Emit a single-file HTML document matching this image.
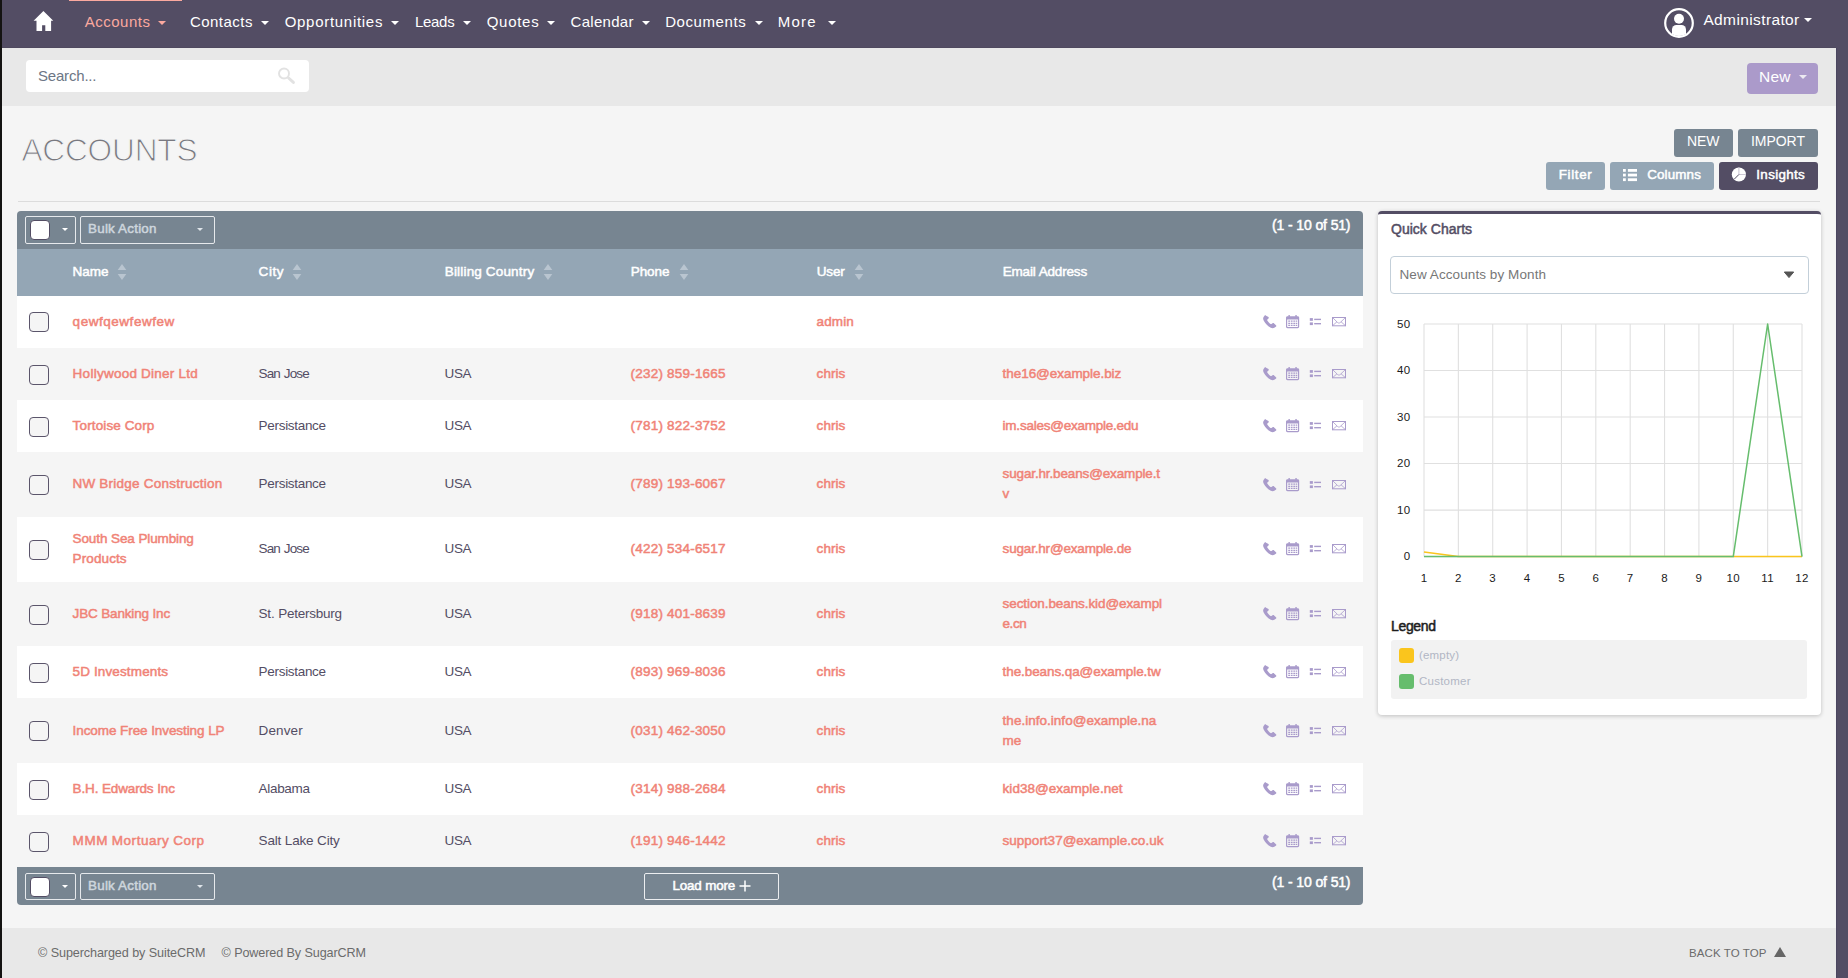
<!DOCTYPE html>
<html lang="en">
<head>
<meta charset="utf-8">
<title>Accounts - SuiteCRM</title>
<style>
*{box-sizing:border-box;margin:0;padding:0}
html,body{width:1848px;height:978px;overflow:hidden}
body{background:#141312;font-family:"Liberation Sans",sans-serif;font-size:14px;color:#534d64;position:relative}
a{text-decoration:none;color:inherit}
i{font-style:normal;display:block}
.abs{position:absolute}
#app{position:absolute;left:2px;top:0;width:1834px;height:978px;background:#f5f5f5}
#scroll{position:absolute;left:1836px;top:0;width:12px;height:978px;background:#534d64}
#scroll i{position:absolute;left:0;top:48px;width:1px;height:930px;background:#4b4660}
#edge{position:absolute;left:1835px;top:48px;width:1px;height:930px;background:#f3f3f3}
/* navbar */
#nav{position:absolute;left:2px;top:0;width:1834px;height:48px;background:#534d64;border-bottom:1px solid #4f495f}
.item{position:absolute;top:11px;height:22px;line-height:22px;font-size:15px;color:#fff;white-space:nowrap}
.item.active{color:#fba99f}
.caret{position:absolute;top:21px;width:0;height:0;border-left:4px solid transparent;border-right:4px solid transparent;border-top:4px solid #fff}
.caret.active{border-top-color:#fba99f}
#navbar-active{position:absolute;left:69px;top:0;width:113px;height:1px;background:#fba99f}
#admin{position:absolute;left:1703.4px;top:9.1px;line-height:22px;font-size:15.5px;color:#fff;white-space:nowrap}
/* search strip */
#strip{position:absolute;left:2px;top:48px;width:1834px;height:58px;background:#e8e8e8}
#search{position:absolute;left:26px;top:60px;width:283px;height:32px;background:#fff;border-radius:4px}
#search span.t{position:absolute;left:12px;top:0;line-height:31.4px;font-size:15px;color:#6c7685;white-space:nowrap}
#newbtn{position:absolute;left:1747px;top:63px;width:71px;height:31px;background:#ab9aca;border-radius:4px;color:#fff;font-size:15.5px;line-height:28.4px}
#newbtn span.t{position:absolute;left:12px;top:0;white-space:nowrap}
#newbtn i{position:absolute;left:52px;top:12px;width:0;height:0;border-left:4px solid transparent;border-right:4px solid transparent;border-top:4px solid #ece9f1}
/* title */
#title{position:absolute;left:21.4px;top:130.6px;font-size:31.6px;line-height:38px;color:#797980;font-weight:400;white-space:nowrap;-webkit-text-stroke:1.05px #f5f5f5}
.btn{position:absolute;height:28px;border-radius:3px;color:#fff;line-height:24px;white-space:nowrap}
.btn>span{position:absolute;top:0}
.btn.main{background:#778591;font-size:14px}
.btn.sub{line-height:26.3px;background:#94a6b5;font-weight:400;-webkit-text-stroke-width:.5px;font-size:13.4px}
.btn.dark{background:#534d64}
#hr{position:absolute;left:18px;top:201px;width:1802px;height:1px;background:#dcdcdc}
/* table */
#tbar,#bbar{position:absolute;left:17px;width:1346px;height:38px;background:#778591}
#tbar{top:211px;border-radius:4px 4px 0 0}
#bbar{top:867px;border-radius:0 0 4px 4px}
#thead{position:absolute;left:17px;top:249px;width:1346px;height:47px;background:#94a6b5}
.selbox{position:absolute;left:25px;width:51px;height:28px;border:1px solid #e6e9ec;border-radius:2px}
.selbox i.k{position:absolute;left:4px;top:3px;width:20px;height:20px;border:1px solid #534d64;border-radius:4px;background:#fff}
.selbox i.v{position:absolute;left:36px;top:11px;width:0;height:0;border-left:3px solid transparent;border-right:3px solid transparent;border-top:3px solid #fff}
.bulk{position:absolute;left:80px;width:135px;height:28px;border:1px solid #e6e9ec;border-radius:2px;font-weight:400;-webkit-text-stroke-width:.5px;font-size:13.4px;color:#ced6dd;line-height:24px;white-space:nowrap}
.bulk>span{position:absolute;left:7px;top:0}
.bulk i{position:absolute;left:116px;top:11px;width:0;height:0;border-left:3px solid transparent;border-right:3px solid transparent;border-top:3px solid #dfe5ea}
.count{position:absolute;font-weight:400;-webkit-text-stroke-width:.5px;font-size:14px;color:#fff;white-space:nowrap;line-height:20px}
.row{position:absolute;left:17px;width:1346px}
.c{position:absolute;margin-top:-.4px;margin-left:.6px;line-height:20px;height:20px;white-space:nowrap;font-size:13.5px}
.lk{color:#f08377;font-weight:400;-webkit-text-stroke-width:.5px}
.tx{color:#534d64}
.th{color:#fff;font-weight:400;-webkit-text-stroke-width:.5px}
.cb{position:absolute;margin-top:-.2px;left:29px;width:20px;height:20px;border:1px solid #5b556b;border-radius:4px;background:#f5f5f5}
#loadmore{position:absolute;left:644px;top:873px;width:135px;height:27px;border:1px solid #eceef0;border-radius:2px;color:#fff;font-weight:400;-webkit-text-stroke-width:.5px;font-size:13.4px;line-height:24px;white-space:nowrap}
#loadmore>span{position:absolute;left:27.6px;top:0}
/* panel */
#panel{position:absolute;left:1378px;top:211px;width:443px;height:504px;background:#fff;border-top:3px solid #534d64;border-radius:4px;box-shadow:0 1px 4px rgba(0,0,0,.22)}
#ptitle{position:absolute;left:1391px;top:219px;font-weight:400;-webkit-text-stroke-width:.5px;font-size:14px;line-height:20px;color:#534d64;white-space:nowrap}
#psel{position:absolute;left:1390px;top:256px;width:419px;height:38px;border:1px solid #c3cfd9;border-radius:4px;background:#fff}
#psel>span{position:absolute;left:8.5px;top:0;line-height:35px;font-size:13.5px;color:#777;white-space:nowrap}
#legendt{position:absolute;left:1391px;top:616px;font-weight:400;-webkit-text-stroke-width:.5px;font-size:14px;line-height:20px;color:#1d1d1d;white-space:nowrap}
#legend{position:absolute;left:1391px;top:640px;width:416px;height:59px;background:#f2f2f2;border-radius:3px}
.sw{position:absolute;left:1399px;width:15px;height:15px;border-radius:3px}
.ll{position:absolute;left:1419px;font-size:11.5px;line-height:16px;color:#b1b6c4;white-space:nowrap}
/* footer */
#footer{position:absolute;left:2px;top:928px;width:1834px;height:50px;background:#e8e8e8}
.ft{position:absolute;top:943.5px;font-size:12.6px;line-height:18px;color:#6b6b6b;white-space:nowrap}
</style>
</head>
<body>
<div id="app"></div>
<div id="scroll"><i></i></div>
<div id="edge"></div>

<!-- NAVBAR -->
<div id="nav"></div>
<div id="navbar-active"></div>
<svg class="abs" style="left:33px;top:10px" width="21" height="22" viewBox="33 10 21 22"><path d="M43.400 10.900L33.600 20.700H36.500V31H42.100V25.200H45.300V31H51.100V20.700H53.300Z" fill="#fff"/></svg>
<a class="item active" style="left:84.7px;letter-spacing:0.5px">Accounts</a><i class="caret active" style="left:158.2px"></i>
<a class="item" style="left:189.9px;letter-spacing:0.471px">Contacts</a><i class="caret" style="left:261.0px"></i>
<a class="item" style="left:284.7px;letter-spacing:0.707px">Opportunities</a><i class="caret" style="left:391.0px"></i>
<a class="item" style="left:414.9px;letter-spacing:-0.269px">Leads</a><i class="caret" style="left:462.7px"></i>
<a class="item" style="left:486.7px;letter-spacing:0.725px">Quotes</a><i class="caret" style="left:547.0px"></i>
<a class="item" style="left:570.5px;letter-spacing:0.304px">Calendar</a><i class="caret" style="left:641.5px"></i>
<a class="item" style="left:665.2px;letter-spacing:0.578px">Documents</a><i class="caret" style="left:754.5px"></i>
<a class="item" style="left:777.7px;letter-spacing:1.271px">More</a><i class="caret" style="left:828.0px"></i>
<svg class="abs" style="left:1664px;top:8px" width="30" height="30" viewBox="0 0 30 30"><defs><clipPath id="uc"><circle cx="15" cy="15" r="13"/></clipPath></defs><circle cx="15" cy="15" r="13.800" fill="none" stroke="#fff" stroke-width="2.200"/><circle cx="15" cy="10.700" r="5" fill="#fff"/><path d="M8 30V21.500a4.500 4.500 0 0 1 4.500-4.500h5a4.500 4.500 0 0 1 4.500 4.500V30z" fill="#fff" clip-path="url(#uc)"/></svg>
<div id="admin"><span style="letter-spacing:0.382px">Administrator</span></div>
<i class="caret" style="left:1804px;top:18px"></i>

<!-- SEARCH STRIP -->
<div id="strip"></div>
<div id="search"><span class="t"><span style="letter-spacing:-0.191px">Search...</span></span>
<svg class="abs" style="left:250px;top:6px" width="22" height="20" viewBox="0 0 22 20"><circle cx="8" cy="7.500" r="5" fill="none" stroke="#e2e2e2" stroke-width="1.900"/><path d="M12.600 12L17.400 16.400" stroke="#e2e2e2" stroke-width="3" stroke-linecap="round"/></svg>
</div>
<div id="newbtn"><span class="t"><span style="letter-spacing:0.242px">New</span></span><i></i></div>

<!-- TITLE + ACTIONS -->
<h1 id="title"><span style="letter-spacing:-0.171px">ACCOUNTS</span></h1>
<div class="btn main" style="left:1674px;top:129px;width:59px"><span style="left:13.1px"><span style="letter-spacing:-0.086px">NEW</span></span></div>
<div class="btn main" style="left:1738px;top:129px;width:80px"><span style="left:13px"><span style="letter-spacing:-0.041px">IMPORT</span></span></div>
<div class="btn sub" style="left:1546px;top:162px;width:59px"><span style="left:12.8px"><span style="letter-spacing:0.627px">Filter</span></span></div>
<div class="btn sub" style="left:1610px;top:162px;width:104px"><span style="left:37.2px"><span style="letter-spacing:0.143px">Columns</span></span>
<svg class="abs" style="left:13px;top:7px" width="14" height="13" viewBox="0 0 14 13" fill="#fff"><rect x="0" y="0" width="2.800" height="2.800"/><rect x="4.900" y="0" width="9.100" height="2.800"/><rect x="0" y="4.650" width="2.800" height="2.800"/><rect x="4.900" y="4.650" width="9.100" height="2.800"/><rect x="0" y="9.300" width="2.800" height="2.800"/><rect x="4.900" y="9.300" width="9.100" height="2.800"/></svg></div>
<div class="btn sub dark" style="left:1719px;top:162px;width:99px"><span style="left:37.3px"><span style="letter-spacing:0.335px">Insights</span></span>
<svg class="abs" style="left:12px;top:5px" width="16" height="16" viewBox="0 0 16 16"><circle cx="7.900" cy="7.500" r="7.100" fill="#fff"/><path d="M7.900 0.400V7.500H15" stroke="#cdc9d6" stroke-width="1.100" fill="none"/><path d="M7.900 7.500L2.900 12.500" stroke="#534d64" stroke-width="1" fill="none"/></svg></div>
<div id="hr"></div>

<!-- TABLE -->
<div id="tbar"></div>
<div class="selbox" style="top:216px"><i class="k"></i><i class="v"></i></div>
<div class="bulk" style="top:216px"><span><span style="letter-spacing:0.25px;word-spacing:-0.25px">Bulk Action</span></span><i></i></div>
<div class="count" style="left:1272px;top:215px"><span style="letter-spacing:-0.184px;word-spacing:0.184px">(1 - 10 of 51)</span></div>
<div id="thead"></div>
<div class="c th" style="left:71.8px;top:262px;letter-spacing:-0.005px">Name</div>
<svg class="abs" style="left:117.4px;top:264px" width="10" height="16" viewBox="0 0 10 16" fill="#b9c5d0"><path d="M5 0L9.300 6H0.700z"/><path d="M5 16L9.300 10H0.700z"/></svg>
<div class="c th" style="left:258.0px;top:262px;letter-spacing:0.583px">City</div>
<svg class="abs" style="left:292.4px;top:264px" width="10" height="16" viewBox="0 0 10 16" fill="#b9c5d0"><path d="M5 0L9.300 6H0.700z"/><path d="M5 16L9.300 10H0.700z"/></svg>
<div class="c th" style="left:444.1px;top:262px;letter-spacing:0.189px;word-spacing:-0.189px">Billing Country</div>
<svg class="abs" style="left:543.4px;top:264px" width="10" height="16" viewBox="0 0 10 16" fill="#b9c5d0"><path d="M5 0L9.300 6H0.700z"/><path d="M5 16L9.300 10H0.700z"/></svg>
<div class="c th" style="left:630.1px;top:262px;letter-spacing:-0.062px">Phone</div>
<svg class="abs" style="left:679.1px;top:264px" width="10" height="16" viewBox="0 0 10 16" fill="#b9c5d0"><path d="M5 0L9.300 6H0.700z"/><path d="M5 16L9.300 10H0.700z"/></svg>
<div class="c th" style="left:816.1px;top:262px;letter-spacing:-0.139px">User</div>
<svg class="abs" style="left:853.9px;top:264px" width="10" height="16" viewBox="0 0 10 16" fill="#b9c5d0"><path d="M5 0L9.300 6H0.700z"/><path d="M5 16L9.300 10H0.700z"/></svg>
<div class="c th" style="left:1002.1px;top:262.5px;letter-spacing:-0.163px;word-spacing:0.163px">Email Address</div>
<div class="row" style="top:296px;height:52px;background:#fff"></div>
<i class="cb" style="top:312.5px"></i>
<div class="c lk" style="left:72px;top:312.0px;letter-spacing:0.532px">qewfqewfewfew</div>
<div class="c lk" style="left:816px;top:312.0px;letter-spacing:0.105px">admin</div>
<svg class="abs" style="left:1262px;top:315.4px" width="86" height="16" viewBox="0 0 86 16" fill="#a99bcb">
<path transform="translate(.9,0) scale(1,.96)" d="M3.2 0.7c-.5-.5-1.2-.4-1.6.1L.7 2C0 3 .1 4.500 .9 5.900c1.500 2.800 3.700 5.300 6.600 7.100 1.300.8 2.800 1 3.900.3l1.500-1c.6-.4.700-1.200.2-1.700L11.200 8.800c-.4-.4-1.100-.5-1.600-.1l-1 .8c-.3.200-.7.200-1 0C6.300 8.400 5 6.900 4.300 5.500c-.2-.3-.1-.7.200-.9l.9-.8c.5-.4.600-1.100.2-1.600z"/>
<g transform="translate(23.700,0) scale(1.06,.98)"><path d="M2.600 0h1.300v1.400h5.200V0h1.300v1.400h.9c.8 0 1.400.6 1.400 1.400v9.300c0 .8-.6 1.400-1.400 1.400H1.700c-.8 0-1.400-.6-1.400-1.400V2.800c0-.8.600-1.400 1.400-1.400h.9zM1.400 4.500v7.300c0 .300.200.5.500.5h9.200c.3 0 .5-.2.500-.5V4.500z"/><path d="M2.400 5.600h1.700v1.400H2.400zM4.800 5.600h1.700v1.400H4.800zM7.200 5.600h1.700v1.400H7.200zM9.500 5.600h1.400v1.400H9.500zM2.400 7.800h1.700v1.400H2.400zM4.800 7.800h1.700v1.400H4.800zM7.200 7.800h1.700v1.400H7.200zM9.500 7.800h1.400v1.400H9.500zM2.400 10h1.700v1.300H2.400zM4.800 10h1.700v1.300H4.800zM7.200 10h1.700v1.300H7.200zM9.500 10h1.400v1.300H9.500z"/></g>
<g transform="translate(47.800,0)"><rect x="0" y="3.100" width="3.100" height="2.700"/><rect x="4.400" y="3.700" width="6.800" height="1.400"/><rect x="0" y="7.400" width="3.100" height="2.700"/><rect x="4.400" y="8" width="6.800" height="1.400"/></g>
<g transform="translate(70,0)" fill="none" stroke="#a99bcb"><rect x="0.500" y="2.500" width="13" height="8.300" stroke-width="1"/><path d="M0.800 2.800L5.700 7.600c.7.600 1.700.6 2.400 0L13.200 2.800M0.800 10.500L5 6.700M13.200 10.500L9 6.700" stroke-width=".8"/></g>
</svg>
<div class="row" style="top:348px;height:52px;background:#f5f5f5"></div>
<i class="cb" style="top:365.1px"></i>
<div class="c lk" style="left:72px;top:364.0px;letter-spacing:0.268px;word-spacing:-0.268px">Hollywood Diner Ltd</div>
<div class="c tx" style="left:258px;top:364.0px;letter-spacing:-0.866px;word-spacing:0.866px">San Jose</div>
<div class="c tx" style="left:444px;top:364.0px;letter-spacing:-0.383px">USA</div>
<div class="c lk" style="left:630px;top:364.0px;letter-spacing:0.223px;word-spacing:-0.223px">(232) 859-1665</div>
<div class="c lk" style="left:816px;top:364.0px;letter-spacing:0.046px">chris</div>
<div class="c lk" style="left:1002px;top:364.0px;letter-spacing:-0.052px">the16@example.biz</div>
<svg class="abs" style="left:1262px;top:367.4px" width="86" height="16" viewBox="0 0 86 16" fill="#a99bcb">
<path transform="translate(.9,0) scale(1,.96)" d="M3.2 0.7c-.5-.5-1.2-.4-1.6.1L.7 2C0 3 .1 4.500 .9 5.900c1.500 2.800 3.700 5.300 6.600 7.100 1.300.8 2.800 1 3.900.3l1.500-1c.6-.4.700-1.200.2-1.700L11.200 8.800c-.4-.4-1.100-.5-1.600-.1l-1 .8c-.3.200-.7.200-1 0C6.300 8.400 5 6.900 4.300 5.500c-.2-.3-.1-.7.200-.9l.9-.8c.5-.4.600-1.100.2-1.600z"/>
<g transform="translate(23.700,0) scale(1.06,.98)"><path d="M2.600 0h1.300v1.400h5.200V0h1.300v1.400h.9c.8 0 1.400.6 1.400 1.400v9.300c0 .8-.6 1.400-1.400 1.400H1.700c-.8 0-1.400-.6-1.400-1.400V2.800c0-.8.600-1.400 1.400-1.400h.9zM1.400 4.500v7.300c0 .300.200.5.500.5h9.200c.3 0 .5-.2.500-.5V4.500z"/><path d="M2.400 5.600h1.700v1.400H2.400zM4.800 5.600h1.700v1.400H4.800zM7.200 5.600h1.700v1.400H7.200zM9.500 5.600h1.400v1.400H9.500zM2.400 7.800h1.700v1.400H2.400zM4.800 7.800h1.700v1.400H4.800zM7.200 7.800h1.700v1.400H7.200zM9.500 7.800h1.400v1.400H9.500zM2.400 10h1.700v1.300H2.400zM4.800 10h1.700v1.300H4.800zM7.200 10h1.700v1.300H7.200zM9.500 10h1.400v1.300H9.500z"/></g>
<g transform="translate(47.800,0)"><rect x="0" y="3.100" width="3.100" height="2.700"/><rect x="4.400" y="3.700" width="6.800" height="1.400"/><rect x="0" y="7.400" width="3.100" height="2.700"/><rect x="4.400" y="8" width="6.800" height="1.400"/></g>
<g transform="translate(70,0)" fill="none" stroke="#a99bcb"><rect x="0.500" y="2.500" width="13" height="8.300" stroke-width="1"/><path d="M0.800 2.800L5.700 7.600c.7.600 1.700.6 2.400 0L13.200 2.800M0.800 10.500L5 6.700M13.200 10.500L9 6.700" stroke-width=".8"/></g>
</svg>
<div class="row" style="top:400px;height:52px;background:#fff"></div>
<i class="cb" style="top:417.1px"></i>
<div class="c lk" style="left:72px;top:416.0px;letter-spacing:0.137px;word-spacing:-0.137px">Tortoise Corp</div>
<div class="c tx" style="left:258px;top:416.0px;letter-spacing:-0.305px">Persistance</div>
<div class="c tx" style="left:444px;top:416.0px;letter-spacing:-0.383px">USA</div>
<div class="c lk" style="left:630px;top:416.0px;letter-spacing:0.223px;word-spacing:-0.223px">(781) 822-3752</div>
<div class="c lk" style="left:816px;top:416.0px;letter-spacing:0.046px">chris</div>
<div class="c lk" style="left:1002px;top:416.0px;letter-spacing:-0.238px">im.sales@example.edu</div>
<svg class="abs" style="left:1262px;top:419.4px" width="86" height="16" viewBox="0 0 86 16" fill="#a99bcb">
<path transform="translate(.9,0) scale(1,.96)" d="M3.2 0.7c-.5-.5-1.2-.4-1.6.1L.7 2C0 3 .1 4.500 .9 5.900c1.500 2.800 3.700 5.300 6.600 7.100 1.300.8 2.800 1 3.900.3l1.500-1c.6-.4.700-1.200.2-1.700L11.200 8.800c-.4-.4-1.100-.5-1.600-.1l-1 .8c-.3.200-.7.200-1 0C6.300 8.400 5 6.900 4.300 5.500c-.2-.3-.1-.7.200-.9l.9-.8c.5-.4.600-1.100.2-1.600z"/>
<g transform="translate(23.700,0) scale(1.06,.98)"><path d="M2.600 0h1.300v1.400h5.200V0h1.300v1.400h.9c.8 0 1.400.6 1.400 1.400v9.300c0 .8-.6 1.400-1.400 1.400H1.700c-.8 0-1.400-.6-1.400-1.400V2.800c0-.8.600-1.400 1.400-1.400h.9zM1.400 4.500v7.300c0 .300.200.5.500.5h9.200c.3 0 .5-.2.500-.5V4.500z"/><path d="M2.400 5.600h1.700v1.400H2.400zM4.800 5.600h1.700v1.400H4.800zM7.200 5.600h1.700v1.400H7.200zM9.500 5.600h1.400v1.400H9.500zM2.400 7.800h1.700v1.400H2.400zM4.800 7.800h1.700v1.400H4.800zM7.200 7.800h1.700v1.400H7.200zM9.500 7.800h1.400v1.400H9.500zM2.400 10h1.700v1.300H2.400zM4.800 10h1.700v1.300H4.800zM7.200 10h1.700v1.300H7.200zM9.500 10h1.400v1.300H9.500z"/></g>
<g transform="translate(47.800,0)"><rect x="0" y="3.100" width="3.100" height="2.700"/><rect x="4.400" y="3.700" width="6.800" height="1.400"/><rect x="0" y="7.400" width="3.100" height="2.700"/><rect x="4.400" y="8" width="6.800" height="1.400"/></g>
<g transform="translate(70,0)" fill="none" stroke="#a99bcb"><rect x="0.500" y="2.500" width="13" height="8.300" stroke-width="1"/><path d="M0.800 2.800L5.700 7.600c.7.600 1.700.6 2.400 0L13.200 2.800M0.800 10.500L5 6.700M13.200 10.500L9 6.700" stroke-width=".8"/></g>
</svg>
<div class="row" style="top:452px;height:65px;background:#f5f5f5"></div>
<i class="cb" style="top:475.0px"></i>
<div class="c lk" style="left:72px;top:474.5px;letter-spacing:0.252px;word-spacing:-0.252px">NW Bridge Construction</div>
<div class="c tx" style="left:258px;top:474.5px;letter-spacing:-0.305px">Persistance</div>
<div class="c tx" style="left:444px;top:474.5px;letter-spacing:-0.383px">USA</div>
<div class="c lk" style="left:630px;top:474.5px;letter-spacing:0.223px;word-spacing:-0.223px">(789) 193-6067</div>
<div class="c lk" style="left:816px;top:474.5px;letter-spacing:0.046px">chris</div>
<div class="c lk" style="left:1002px;top:464.5px;letter-spacing:-0.144px">sugar.hr.beans@example.t</div><div class="c lk" style="left:1002px;top:484.5px;letter-spacing:0px">v</div>
<svg class="abs" style="left:1262px;top:477.9px" width="86" height="16" viewBox="0 0 86 16" fill="#a99bcb">
<path transform="translate(.9,0) scale(1,.96)" d="M3.2 0.7c-.5-.5-1.2-.4-1.6.1L.7 2C0 3 .1 4.500 .9 5.900c1.500 2.800 3.700 5.300 6.600 7.100 1.300.8 2.800 1 3.900.3l1.500-1c.6-.4.700-1.200.2-1.700L11.200 8.800c-.4-.4-1.100-.5-1.600-.1l-1 .8c-.3.200-.7.200-1 0C6.300 8.400 5 6.900 4.300 5.500c-.2-.3-.1-.7.200-.9l.9-.8c.5-.4.600-1.100.2-1.600z"/>
<g transform="translate(23.700,0) scale(1.06,.98)"><path d="M2.600 0h1.300v1.400h5.200V0h1.300v1.400h.9c.8 0 1.400.6 1.400 1.400v9.300c0 .8-.6 1.400-1.400 1.400H1.700c-.8 0-1.400-.6-1.400-1.400V2.800c0-.8.600-1.400 1.400-1.400h.9zM1.400 4.500v7.300c0 .300.200.5.500.5h9.200c.3 0 .5-.2.500-.5V4.500z"/><path d="M2.400 5.600h1.700v1.400H2.400zM4.800 5.600h1.700v1.400H4.800zM7.200 5.600h1.700v1.400H7.200zM9.500 5.600h1.400v1.400H9.500zM2.400 7.800h1.700v1.400H2.400zM4.800 7.800h1.700v1.400H4.800zM7.200 7.800h1.700v1.400H7.200zM9.500 7.800h1.400v1.400H9.500zM2.400 10h1.700v1.300H2.400zM4.800 10h1.700v1.300H4.800zM7.200 10h1.700v1.300H7.200zM9.500 10h1.400v1.300H9.500z"/></g>
<g transform="translate(47.800,0)"><rect x="0" y="3.100" width="3.100" height="2.700"/><rect x="4.400" y="3.700" width="6.800" height="1.400"/><rect x="0" y="7.400" width="3.100" height="2.700"/><rect x="4.400" y="8" width="6.800" height="1.400"/></g>
<g transform="translate(70,0)" fill="none" stroke="#a99bcb"><rect x="0.500" y="2.500" width="13" height="8.300" stroke-width="1"/><path d="M0.800 2.800L5.700 7.600c.7.600 1.700.6 2.400 0L13.200 2.800M0.800 10.500L5 6.700M13.200 10.500L9 6.700" stroke-width=".8"/></g>
</svg>
<div class="row" style="top:517px;height:65px;background:#fff"></div>
<i class="cb" style="top:540.0px"></i>
<div class="c lk" style="left:72px;top:529.5px;letter-spacing:-0.12px;word-spacing:0.12px">South Sea Plumbing</div><div class="c lk" style="left:72px;top:549.5px;letter-spacing:0.103px">Products</div>
<div class="c tx" style="left:258px;top:539.5px;letter-spacing:-0.866px;word-spacing:0.866px">San Jose</div>
<div class="c tx" style="left:444px;top:539.5px;letter-spacing:-0.383px">USA</div>
<div class="c lk" style="left:630px;top:539.5px;letter-spacing:0.223px;word-spacing:-0.223px">(422) 534-6517</div>
<div class="c lk" style="left:816px;top:539.5px;letter-spacing:0.046px">chris</div>
<div class="c lk" style="left:1002px;top:539.5px;letter-spacing:-0.182px">sugar.hr@example.de</div>
<svg class="abs" style="left:1262px;top:541.9px" width="86" height="16" viewBox="0 0 86 16" fill="#a99bcb">
<path transform="translate(.9,0) scale(1,.96)" d="M3.2 0.7c-.5-.5-1.2-.4-1.6.1L.7 2C0 3 .1 4.500 .9 5.900c1.500 2.800 3.700 5.300 6.600 7.100 1.300.8 2.800 1 3.900.3l1.500-1c.6-.4.700-1.200.2-1.700L11.200 8.800c-.4-.4-1.100-.5-1.600-.1l-1 .8c-.3.200-.7.200-1 0C6.300 8.400 5 6.900 4.300 5.500c-.2-.3-.1-.7.200-.9l.9-.8c.5-.4.600-1.100.2-1.600z"/>
<g transform="translate(23.700,0) scale(1.06,.98)"><path d="M2.600 0h1.300v1.400h5.200V0h1.300v1.400h.9c.8 0 1.400.6 1.400 1.400v9.300c0 .8-.6 1.400-1.400 1.400H1.700c-.8 0-1.400-.6-1.400-1.400V2.800c0-.8.600-1.400 1.400-1.400h.9zM1.400 4.500v7.300c0 .300.200.5.500.5h9.200c.3 0 .5-.2.500-.5V4.500z"/><path d="M2.400 5.600h1.700v1.400H2.400zM4.800 5.600h1.700v1.400H4.800zM7.200 5.600h1.700v1.400H7.200zM9.500 5.600h1.400v1.400H9.500zM2.400 7.800h1.700v1.400H2.400zM4.800 7.800h1.700v1.400H4.800zM7.200 7.800h1.700v1.400H7.200zM9.500 7.800h1.400v1.400H9.500zM2.400 10h1.700v1.300H2.400zM4.800 10h1.700v1.300H4.800zM7.200 10h1.700v1.300H7.200zM9.500 10h1.400v1.300H9.500z"/></g>
<g transform="translate(47.800,0)"><rect x="0" y="3.100" width="3.100" height="2.700"/><rect x="4.400" y="3.700" width="6.800" height="1.400"/><rect x="0" y="7.400" width="3.100" height="2.700"/><rect x="4.400" y="8" width="6.800" height="1.400"/></g>
<g transform="translate(70,0)" fill="none" stroke="#a99bcb"><rect x="0.500" y="2.500" width="13" height="8.300" stroke-width="1"/><path d="M0.800 2.800L5.700 7.600c.7.600 1.700.6 2.400 0L13.200 2.800M0.800 10.500L5 6.700M13.200 10.500L9 6.700" stroke-width=".8"/></g>
</svg>
<div class="row" style="top:582px;height:64px;background:#f5f5f5"></div>
<i class="cb" style="top:605.1px"></i>
<div class="c lk" style="left:72px;top:604.0px;letter-spacing:-0.184px;word-spacing:0.184px">JBC Banking Inc</div>
<div class="c tx" style="left:258px;top:604.0px;letter-spacing:-0.233px;word-spacing:0.233px">St. Petersburg</div>
<div class="c tx" style="left:444px;top:604.0px;letter-spacing:-0.383px">USA</div>
<div class="c lk" style="left:630px;top:604.0px;letter-spacing:0.223px;word-spacing:-0.223px">(918) 401-8639</div>
<div class="c lk" style="left:816px;top:604.0px;letter-spacing:0.046px">chris</div>
<div class="c lk" style="left:1002px;top:594.0px;letter-spacing:-0.089px">section.beans.kid@exampl</div><div class="c lk" style="left:1002px;top:614.0px;letter-spacing:-0.477px">e.cn</div>
<svg class="abs" style="left:1262px;top:607.4px" width="86" height="16" viewBox="0 0 86 16" fill="#a99bcb">
<path transform="translate(.9,0) scale(1,.96)" d="M3.2 0.7c-.5-.5-1.2-.4-1.6.1L.7 2C0 3 .1 4.500 .9 5.900c1.500 2.800 3.700 5.300 6.600 7.100 1.300.8 2.800 1 3.900.3l1.500-1c.6-.4.700-1.200.2-1.700L11.200 8.800c-.4-.4-1.100-.5-1.600-.1l-1 .8c-.3.200-.7.200-1 0C6.300 8.400 5 6.900 4.300 5.500c-.2-.3-.1-.7.200-.9l.9-.8c.5-.4.600-1.100.2-1.600z"/>
<g transform="translate(23.700,0) scale(1.06,.98)"><path d="M2.600 0h1.300v1.400h5.200V0h1.300v1.400h.9c.8 0 1.400.6 1.400 1.400v9.300c0 .8-.6 1.400-1.400 1.400H1.700c-.8 0-1.400-.6-1.400-1.400V2.800c0-.8.600-1.400 1.400-1.400h.9zM1.400 4.500v7.300c0 .300.200.5.500.5h9.200c.3 0 .5-.2.500-.5V4.500z"/><path d="M2.400 5.600h1.700v1.400H2.400zM4.800 5.600h1.700v1.400H4.800zM7.200 5.600h1.700v1.400H7.200zM9.500 5.600h1.400v1.400H9.500zM2.400 7.800h1.700v1.400H2.400zM4.800 7.800h1.700v1.400H4.800zM7.200 7.800h1.700v1.400H7.200zM9.500 7.800h1.400v1.400H9.500zM2.400 10h1.700v1.300H2.400zM4.800 10h1.700v1.300H4.800zM7.200 10h1.700v1.300H7.200zM9.500 10h1.400v1.300H9.500z"/></g>
<g transform="translate(47.800,0)"><rect x="0" y="3.100" width="3.100" height="2.700"/><rect x="4.400" y="3.700" width="6.800" height="1.400"/><rect x="0" y="7.400" width="3.100" height="2.700"/><rect x="4.400" y="8" width="6.800" height="1.400"/></g>
<g transform="translate(70,0)" fill="none" stroke="#a99bcb"><rect x="0.500" y="2.500" width="13" height="8.300" stroke-width="1"/><path d="M0.800 2.800L5.700 7.600c.7.600 1.700.6 2.400 0L13.200 2.800M0.800 10.500L5 6.700M13.200 10.500L9 6.700" stroke-width=".8"/></g>
</svg>
<div class="row" style="top:646px;height:52px;background:#fff"></div>
<i class="cb" style="top:663.5px"></i>
<div class="c lk" style="left:72px;top:662.0px;letter-spacing:0.142px;word-spacing:-0.142px">5D Investments</div>
<div class="c tx" style="left:258px;top:662.0px;letter-spacing:-0.305px">Persistance</div>
<div class="c tx" style="left:444px;top:662.0px;letter-spacing:-0.383px">USA</div>
<div class="c lk" style="left:630px;top:662.0px;letter-spacing:0.223px;word-spacing:-0.223px">(893) 969-8036</div>
<div class="c lk" style="left:816px;top:662.0px;letter-spacing:0.046px">chris</div>
<div class="c lk" style="left:1002px;top:662.0px;letter-spacing:-0.089px">the.beans.qa@example.tw</div>
<svg class="abs" style="left:1262px;top:665.4px" width="86" height="16" viewBox="0 0 86 16" fill="#a99bcb">
<path transform="translate(.9,0) scale(1,.96)" d="M3.2 0.7c-.5-.5-1.2-.4-1.6.1L.7 2C0 3 .1 4.500 .9 5.900c1.500 2.800 3.700 5.300 6.600 7.100 1.300.8 2.800 1 3.900.3l1.500-1c.6-.4.700-1.200.2-1.700L11.200 8.800c-.4-.4-1.100-.5-1.600-.1l-1 .8c-.3.200-.7.200-1 0C6.300 8.400 5 6.900 4.300 5.500c-.2-.3-.1-.7.200-.9l.9-.8c.5-.4.600-1.100.2-1.600z"/>
<g transform="translate(23.700,0) scale(1.06,.98)"><path d="M2.600 0h1.300v1.400h5.200V0h1.300v1.400h.9c.8 0 1.400.6 1.400 1.400v9.300c0 .8-.6 1.400-1.400 1.400H1.700c-.8 0-1.400-.6-1.400-1.400V2.800c0-.8.600-1.400 1.400-1.400h.9zM1.400 4.500v7.300c0 .300.200.5.500.5h9.200c.3 0 .5-.2.500-.5V4.500z"/><path d="M2.400 5.600h1.700v1.400H2.400zM4.800 5.600h1.700v1.400H4.800zM7.200 5.600h1.700v1.400H7.200zM9.500 5.600h1.400v1.400H9.500zM2.400 7.800h1.700v1.400H2.400zM4.800 7.800h1.700v1.400H4.800zM7.200 7.800h1.700v1.400H7.200zM9.500 7.800h1.400v1.400H9.500zM2.400 10h1.700v1.300H2.400zM4.800 10h1.700v1.300H4.800zM7.200 10h1.700v1.300H7.200zM9.500 10h1.400v1.300H9.500z"/></g>
<g transform="translate(47.800,0)"><rect x="0" y="3.100" width="3.100" height="2.700"/><rect x="4.400" y="3.700" width="6.800" height="1.400"/><rect x="0" y="7.400" width="3.100" height="2.700"/><rect x="4.400" y="8" width="6.800" height="1.400"/></g>
<g transform="translate(70,0)" fill="none" stroke="#a99bcb"><rect x="0.500" y="2.500" width="13" height="8.300" stroke-width="1"/><path d="M0.800 2.800L5.700 7.600c.7.600 1.700.6 2.400 0L13.200 2.800M0.800 10.500L5 6.700M13.200 10.500L9 6.700" stroke-width=".8"/></g>
</svg>
<div class="row" style="top:698px;height:65px;background:#f5f5f5"></div>
<i class="cb" style="top:721.0px"></i>
<div class="c lk" style="left:72px;top:721.5px;letter-spacing:-0.091px;word-spacing:0.091px">Income Free Investing LP</div>
<div class="c tx" style="left:258px;top:721.5px;letter-spacing:0.114px">Denver</div>
<div class="c tx" style="left:444px;top:721.5px;letter-spacing:-0.383px">USA</div>
<div class="c lk" style="left:630px;top:721.5px;letter-spacing:0.223px;word-spacing:-0.223px">(031) 462-3050</div>
<div class="c lk" style="left:816px;top:721.5px;letter-spacing:0.046px">chris</div>
<div class="c lk" style="left:1002px;top:711.5px;letter-spacing:0.021px">the.info.info@example.na</div><div class="c lk" style="left:1002px;top:731.5px;letter-spacing:-0.066px">me</div>
<svg class="abs" style="left:1262px;top:723.9px" width="86" height="16" viewBox="0 0 86 16" fill="#a99bcb">
<path transform="translate(.9,0) scale(1,.96)" d="M3.2 0.7c-.5-.5-1.2-.4-1.6.1L.7 2C0 3 .1 4.500 .9 5.900c1.500 2.800 3.700 5.300 6.600 7.100 1.300.8 2.800 1 3.900.3l1.500-1c.6-.4.700-1.200.2-1.700L11.200 8.800c-.4-.4-1.100-.5-1.600-.1l-1 .8c-.3.200-.7.200-1 0C6.300 8.400 5 6.900 4.300 5.500c-.2-.3-.1-.7.200-.9l.9-.8c.5-.4.600-1.100.2-1.600z"/>
<g transform="translate(23.700,0) scale(1.06,.98)"><path d="M2.600 0h1.300v1.400h5.200V0h1.300v1.400h.9c.8 0 1.400.6 1.400 1.400v9.300c0 .8-.6 1.400-1.400 1.400H1.700c-.8 0-1.400-.6-1.400-1.400V2.800c0-.8.600-1.400 1.400-1.400h.9zM1.400 4.500v7.300c0 .300.200.5.500.5h9.200c.3 0 .5-.2.500-.5V4.500z"/><path d="M2.400 5.600h1.700v1.400H2.400zM4.800 5.600h1.700v1.400H4.800zM7.200 5.600h1.700v1.400H7.200zM9.500 5.600h1.400v1.400H9.500zM2.400 7.800h1.700v1.400H2.400zM4.800 7.800h1.700v1.400H4.800zM7.200 7.800h1.700v1.400H7.200zM9.500 7.800h1.400v1.400H9.500zM2.400 10h1.700v1.300H2.400zM4.800 10h1.700v1.300H4.800zM7.200 10h1.700v1.300H7.200zM9.500 10h1.400v1.300H9.500z"/></g>
<g transform="translate(47.800,0)"><rect x="0" y="3.100" width="3.100" height="2.700"/><rect x="4.400" y="3.700" width="6.800" height="1.400"/><rect x="0" y="7.400" width="3.100" height="2.700"/><rect x="4.400" y="8" width="6.800" height="1.400"/></g>
<g transform="translate(70,0)" fill="none" stroke="#a99bcb"><rect x="0.500" y="2.500" width="13" height="8.300" stroke-width="1"/><path d="M0.800 2.800L5.700 7.600c.7.600 1.700.6 2.400 0L13.200 2.800M0.800 10.500L5 6.700M13.200 10.500L9 6.700" stroke-width=".8"/></g>
</svg>
<div class="row" style="top:763px;height:52px;background:#fff"></div>
<i class="cb" style="top:780.5px"></i>
<div class="c lk" style="left:72px;top:779.0px;letter-spacing:-0.154px;word-spacing:0.154px">B.H. Edwards Inc</div>
<div class="c tx" style="left:258px;top:779.0px;letter-spacing:-0.316px">Alabama</div>
<div class="c tx" style="left:444px;top:779.0px;letter-spacing:-0.383px">USA</div>
<div class="c lk" style="left:630px;top:779.0px;letter-spacing:0.223px;word-spacing:-0.223px">(314) 988-2684</div>
<div class="c lk" style="left:816px;top:779.0px;letter-spacing:0.046px">chris</div>
<div class="c lk" style="left:1002px;top:779.0px;letter-spacing:0.023px">kid38@example.net</div>
<svg class="abs" style="left:1262px;top:782.4px" width="86" height="16" viewBox="0 0 86 16" fill="#a99bcb">
<path transform="translate(.9,0) scale(1,.96)" d="M3.2 0.7c-.5-.5-1.2-.4-1.6.1L.7 2C0 3 .1 4.500 .9 5.900c1.500 2.800 3.700 5.300 6.600 7.100 1.300.8 2.800 1 3.900.3l1.500-1c.6-.4.700-1.200.2-1.700L11.200 8.800c-.4-.4-1.100-.5-1.600-.1l-1 .8c-.3.200-.7.200-1 0C6.300 8.400 5 6.900 4.300 5.500c-.2-.3-.1-.7.200-.9l.9-.8c.5-.4.600-1.100.2-1.600z"/>
<g transform="translate(23.700,0) scale(1.06,.98)"><path d="M2.600 0h1.300v1.400h5.200V0h1.300v1.400h.9c.8 0 1.400.6 1.400 1.400v9.300c0 .8-.6 1.400-1.400 1.400H1.700c-.8 0-1.400-.6-1.400-1.400V2.800c0-.8.600-1.400 1.400-1.400h.9zM1.400 4.500v7.300c0 .300.200.5.500.5h9.200c.3 0 .5-.2.500-.5V4.500z"/><path d="M2.400 5.600h1.700v1.400H2.400zM4.800 5.600h1.700v1.400H4.800zM7.200 5.600h1.700v1.400H7.200zM9.500 5.600h1.400v1.400H9.500zM2.400 7.800h1.700v1.400H2.400zM4.800 7.800h1.700v1.400H4.800zM7.200 7.800h1.700v1.400H7.200zM9.500 7.800h1.400v1.400H9.500zM2.400 10h1.700v1.300H2.400zM4.800 10h1.700v1.300H4.800zM7.200 10h1.700v1.300H7.200zM9.500 10h1.400v1.300H9.500z"/></g>
<g transform="translate(47.800,0)"><rect x="0" y="3.100" width="3.100" height="2.700"/><rect x="4.400" y="3.700" width="6.800" height="1.400"/><rect x="0" y="7.400" width="3.100" height="2.700"/><rect x="4.400" y="8" width="6.800" height="1.400"/></g>
<g transform="translate(70,0)" fill="none" stroke="#a99bcb"><rect x="0.500" y="2.500" width="13" height="8.300" stroke-width="1"/><path d="M0.800 2.800L5.700 7.600c.7.600 1.700.6 2.400 0L13.200 2.800M0.800 10.500L5 6.700M13.200 10.500L9 6.700" stroke-width=".8"/></g>
</svg>
<div class="row" style="top:815px;height:52px;background:#f5f5f5"></div>
<i class="cb" style="top:832.5px"></i>
<div class="c lk" style="left:72px;top:831.0px;letter-spacing:0.552px;word-spacing:-0.552px">MMM Mortuary Corp</div>
<div class="c tx" style="left:258px;top:831.0px;letter-spacing:-0.191px;word-spacing:0.191px">Salt Lake City</div>
<div class="c tx" style="left:444px;top:831.0px;letter-spacing:-0.383px">USA</div>
<div class="c lk" style="left:630px;top:831.0px;letter-spacing:0.223px;word-spacing:-0.223px">(191) 946-1442</div>
<div class="c lk" style="left:816px;top:831.0px;letter-spacing:0.046px">chris</div>
<div class="c lk" style="left:1002px;top:831.0px;letter-spacing:0.0px">support37@example.co.uk</div>
<svg class="abs" style="left:1262px;top:834.4px" width="86" height="16" viewBox="0 0 86 16" fill="#a99bcb">
<path transform="translate(.9,0) scale(1,.96)" d="M3.2 0.7c-.5-.5-1.2-.4-1.6.1L.7 2C0 3 .1 4.500 .9 5.900c1.500 2.800 3.700 5.300 6.600 7.100 1.300.8 2.800 1 3.900.3l1.500-1c.6-.4.700-1.200.2-1.700L11.200 8.800c-.4-.4-1.100-.5-1.600-.1l-1 .8c-.3.200-.7.200-1 0C6.300 8.400 5 6.900 4.300 5.500c-.2-.3-.1-.7.200-.9l.9-.8c.5-.4.600-1.100.2-1.600z"/>
<g transform="translate(23.700,0) scale(1.06,.98)"><path d="M2.600 0h1.300v1.400h5.200V0h1.300v1.400h.9c.8 0 1.400.6 1.400 1.400v9.300c0 .8-.6 1.400-1.400 1.400H1.700c-.8 0-1.400-.6-1.400-1.400V2.800c0-.8.600-1.400 1.400-1.400h.9zM1.400 4.500v7.300c0 .300.200.5.500.5h9.200c.3 0 .5-.2.500-.5V4.500z"/><path d="M2.400 5.600h1.700v1.400H2.400zM4.800 5.600h1.700v1.400H4.800zM7.200 5.600h1.700v1.400H7.200zM9.500 5.600h1.400v1.400H9.500zM2.400 7.800h1.700v1.400H2.400zM4.800 7.800h1.700v1.400H4.800zM7.200 7.800h1.700v1.400H7.200zM9.500 7.800h1.400v1.400H9.500zM2.400 10h1.700v1.300H2.400zM4.800 10h1.700v1.300H4.800zM7.200 10h1.700v1.300H7.200zM9.500 10h1.400v1.300H9.500z"/></g>
<g transform="translate(47.800,0)"><rect x="0" y="3.100" width="3.100" height="2.700"/><rect x="4.400" y="3.700" width="6.800" height="1.400"/><rect x="0" y="7.400" width="3.100" height="2.700"/><rect x="4.400" y="8" width="6.800" height="1.400"/></g>
<g transform="translate(70,0)" fill="none" stroke="#a99bcb"><rect x="0.500" y="2.500" width="13" height="8.300" stroke-width="1"/><path d="M0.800 2.800L5.700 7.600c.7.600 1.700.6 2.400 0L13.200 2.800M0.800 10.500L5 6.700M13.200 10.500L9 6.700" stroke-width=".8"/></g>
</svg>
<div id="bbar"></div>
<div class="selbox" style="top:873px;height:27px"><i class="k"></i><i class="v"></i></div>
<div class="bulk" style="top:873px;height:27px"><span style="top:-.5px"><span style="letter-spacing:0.25px;word-spacing:-0.25px">Bulk Action</span></span><i></i></div>
<div id="loadmore"><span><span style="letter-spacing:-0.219px;word-spacing:0.219px">Load more</span></span>
<svg class="abs" style="left:94px;top:6px" width="12" height="12" viewBox="0 0 12 12"><path d="M6 0.500V11.500M0.500 6H11.500" stroke="#fff" stroke-width="1.500"/></svg></div>
<div class="count" style="left:1272px;top:872px"><span style="letter-spacing:-0.184px;word-spacing:0.184px">(1 - 10 of 51)</span></div>

<!-- CHART PANEL -->
<div id="panel"></div>
<div id="ptitle"><span style="letter-spacing:0.018px;word-spacing:-0.018px">Quick Charts</span></div>
<div id="psel"><span><span style="letter-spacing:0.098px;word-spacing:-0.098px">New Accounts by Month</span></span>
<svg class="abs" style="left:392px;top:14px" width="12" height="8" viewBox="0 0 12 8"><path d="M1.300 1H10.700L6 6.600Z" fill="#555" stroke="#555" stroke-width="1" stroke-linejoin="round"/></svg></div>
<svg class="abs" style="left:1380px;top:300px" width="440" height="300" viewBox="1380 300 440 300" font-family="'Liberation Sans',sans-serif" font-size="11.5" letter-spacing=".35" fill="#1b1b1b">
<path d="M1424.00 324.00V556.60M1458.36 324.00V556.60M1492.73 324.00V556.60M1527.09 324.00V556.60M1561.45 324.00V556.60M1595.82 324.00V556.60M1630.18 324.00V556.60M1664.55 324.00V556.60M1698.91 324.00V556.60M1733.27 324.00V556.60M1767.64 324.00V556.60M1802.00 324.00V556.60M1424.00 324.00H1802.00M1424.00 370.52H1802.00M1424.00 417.04H1802.00M1424.00 463.56H1802.00M1424.00 510.08H1802.00M1424.00 556.60H1802.00" stroke="#e0e0e0" stroke-width="1.1" fill="none"/>
<text x="1410.6" y="327.8" text-anchor="end">50</text>
<text x="1410.6" y="374.3" text-anchor="end">40</text>
<text x="1410.6" y="420.8" text-anchor="end">30</text>
<text x="1410.6" y="467.4" text-anchor="end">20</text>
<text x="1410.6" y="513.9" text-anchor="end">10</text>
<text x="1410.6" y="560.4" text-anchor="end">0</text>
<text x="1424.0" y="582.1" text-anchor="middle">1</text>
<text x="1458.4" y="582.1" text-anchor="middle">2</text>
<text x="1492.7" y="582.1" text-anchor="middle">3</text>
<text x="1527.1" y="582.1" text-anchor="middle">4</text>
<text x="1561.5" y="582.1" text-anchor="middle">5</text>
<text x="1595.8" y="582.1" text-anchor="middle">6</text>
<text x="1630.2" y="582.1" text-anchor="middle">7</text>
<text x="1664.5" y="582.1" text-anchor="middle">8</text>
<text x="1698.9" y="582.1" text-anchor="middle">9</text>
<text x="1733.3" y="582.1" text-anchor="middle">10</text>
<text x="1767.6" y="582.1" text-anchor="middle">11</text>
<text x="1802.0" y="582.1" text-anchor="middle">12</text>
<path d="M1424.00 551.95L1458.36 556.60L1802.00 556.60" stroke="#fac51d" stroke-width="1.5" fill="none" stroke-linejoin="round"/>
<path d="M1424.00 556.60L1733.27 556.60L1767.64 324.00L1802.00 556.60" stroke="#66bd6d" stroke-width="1.5" fill="none" stroke-linejoin="round"/>
</svg>
<div id="legendt"><span style="letter-spacing:-0.344px">Legend</span></div>
<div id="legend"></div>
<i class="sw" style="top:648px;background:#fac51d"></i><div class="ll" style="top:647px"><span style="letter-spacing:0.169px">(empty)</span></div>
<i class="sw" style="top:674px;background:#66bd6d"></i><div class="ll" style="top:673px"><span style="letter-spacing:0.234px">Customer</span></div>

<!-- FOOTER -->
<div id="footer"></div>
<div class="ft" style="left:38px"><span style="letter-spacing:-0.095px;word-spacing:0.095px">© Supercharged by SuiteCRM</span></div>
<div class="ft" style="left:221.500px"><span style="letter-spacing:-0.116px;word-spacing:0.116px">© Powered By SugarCRM</span></div>
<div class="ft" style="left:1689px;top:944px;font-size:11.5px"><span style="letter-spacing:0.125px;word-spacing:-0.125px">BACK TO TOP</span></div>
<svg class="abs" style="left:1773px;top:946px" width="14" height="12" viewBox="0 0 14 12"><path d="M7 1L13 11H1Z" fill="#666"/></svg>
</body>
</html>
